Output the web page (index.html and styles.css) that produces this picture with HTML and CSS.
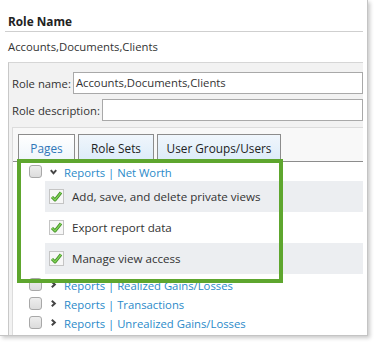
FILE: index.html
```html
<!DOCTYPE html>
<html>
<head>
<meta charset="utf-8">
<link rel="stylesheet" href="styles.css">
</head>
<body>
<div class="panel">
  <div class="title">Role Name</div>
  <div class="value">Accounts,Documents,Clients</div>
  <div class="form">
    <div class="field"><span class="label">Role name:</span><div class="input">Accounts,Documents,Clients</div></div>
    <div class="field field2"><span class="label">Role description:</span><div class="input"></div></div>
    <div class="tabsbox">
      <div class="tabs">
        <div class="tab tab-pages active">Pages</div>
        <div class="tab tab-sets">Role Sets</div>
        <div class="tab tab-users">User Groups/Users</div>
      </div>
      <div class="tree">
        <div class="node">
          <span class="cb"></span>
          <svg class="chev" width="7" height="6" viewBox="0 0 7 6"><path d="M0.8 1.2 L3.5 4.3 L6.2 1.2" fill="none" stroke="#444" stroke-width="2"/></svg>
          <span class="link">Reports | Net Worth</span>
        </div>
        <div class="child shade">
          <span class="ck"><svg width="13" height="13" viewBox="0 0 13 13"><path d="M2 7 L5 10 L11 2.5" fill="none" stroke="#3f8a22" stroke-width="3" stroke-linejoin="round"/><path d="M2 7 L5 10 L11 2.5" fill="none" stroke="#7fd257" stroke-width="1.4" stroke-linejoin="round"/></svg></span>
          <span class="ctext">Add, save, and delete private views</span>
        </div>
        <div class="child">
          <span class="ck"><svg width="13" height="13" viewBox="0 0 13 13"><path d="M2 7 L5 10 L11 2.5" fill="none" stroke="#3f8a22" stroke-width="3" stroke-linejoin="round"/><path d="M2 7 L5 10 L11 2.5" fill="none" stroke="#7fd257" stroke-width="1.4" stroke-linejoin="round"/></svg></span>
          <span class="ctext">Export report data</span>
        </div>
        <div class="child shade">
          <span class="ck"><svg width="13" height="13" viewBox="0 0 13 13"><path d="M2 7 L5 10 L11 2.5" fill="none" stroke="#3f8a22" stroke-width="3" stroke-linejoin="round"/><path d="M2 7 L5 10 L11 2.5" fill="none" stroke="#7fd257" stroke-width="1.4" stroke-linejoin="round"/></svg></span>
          <span class="ctext">Manage view access</span>
        </div>
        <div class="node node-gap">
          <span class="cb"></span>
          <svg class="chev" width="7" height="7" viewBox="0 0 7 7"><path d="M1.8 0.8 L4.8 3.5 L1.8 6.2" fill="none" stroke="#444" stroke-width="2"/></svg>
          <span class="link">Reports | Realized Gains/Losses</span>
        </div>
        <div class="node">
          <span class="cb"></span>
          <svg class="chev" width="7" height="7" viewBox="0 0 7 7"><path d="M1.8 0.8 L4.8 3.5 L1.8 6.2" fill="none" stroke="#444" stroke-width="2"/></svg>
          <span class="link">Reports | Transactions</span>
        </div>
        <div class="node">
          <span class="cb"></span>
          <svg class="chev" width="7" height="7" viewBox="0 0 7 7"><path d="M1.8 0.8 L4.8 3.5 L1.8 6.2" fill="none" stroke="#444" stroke-width="2"/></svg>
          <span class="link">Reports | Unrealized Gains/Losses</span>
        </div>
      </div>
      <div class="highlight"></div>
    </div>
  </div>
</div>
</body>
</html>
```
FILE: styles.css
```css
html, body {
  margin: 0;
  padding: 0;
  background: #ffffff;
}
body {
  width: 377px;
  height: 345px;
  overflow: hidden;
  font-family: "Open Sans", "Noto Sans", sans-serif;
  color: #333;
  font-size: 11.3px;
}
.panel {
  width: 367px;
  height: 335px;
  border-right: 1px solid #c4c4c4;
  border-bottom: 1px solid #c4c4c4;
  box-shadow: 2px 2px 4px rgba(0,0,0,0.22);
  background: #fff;
  display: flex;
  flex-direction: column;
  overflow: hidden;
}
.title {
  margin: 0 4px 0 5px;
  padding: 12px 0 1px 3px;
  line-height: 18px;
  font-weight: bold;
  font-size: 11.8px;
  color: #222;
  border-bottom: 1px solid #cfcfcf;
}
.value {
  padding: 6px 0 0 8px;
  line-height: 18px;
  color: #333;
}
.form {
  margin: 6px 4px 0 8px;
  flex: 1;
  border-left: 1px solid #c8c8c8;
  border-top: 1px solid #d6d6d6;
  background: #f2f2f2;
  display: flex;
  flex-direction: column;
  overflow: hidden;
}
.field {
  display: flex;
  align-items: center;
  padding-left: 3px;
  margin-top: 9px;
  height: 22px;
}
.field2 {
  margin-top: 5px;
}
.label {
  color: #333;
  white-space: nowrap;
  margin-right: 2px;
}
.input {
  flex: 1;
  height: 20px;
  line-height: 20px;
  border: 1px solid #a9a9a9;
  background: #fff;
  padding-left: 2px;
  color: #333;
  white-space: nowrap;
}
.tabsbox {
  position: relative;
  margin: 6px 0 0 3px;
  flex: 1;
  border-left: 1px solid #dcdcdc;
  border-top: 1px solid #dcdcdc;
  background: #fff;
}
.tabs {
  display: flex;
  gap: 3px;
  padding: 6px 0 0 5px;
  background: #f8f8f8;
  border-bottom: 1px solid #8c8c8c;
}
.tab {
  height: 27px;
  line-height: 27px;
  text-align: center;
  font-size: 11.8px;
  border: 1px solid #8c8c8c;
  border-bottom: none;
  background: linear-gradient(#f0f6fc, #dcebf9);
  color: #222;
  box-sizing: border-box;
}
.tab.active {
  background: linear-gradient(#ffffff, #eef5fb);
  color: #2f76b8;
}
.tab-pages { width: 57px; }
.tab-sets { width: 76px; }
.tab-users { width: 124px; }
.node {
  display: flex;
  align-items: center;
  height: 19px;
  padding-left: 16px;
}
.node-gap {
  margin-top: 1px;
}
.cb {
  width: 11px;
  height: 11px;
  border: 1px solid #a8a8a8;
  border-radius: 3px;
  background: linear-gradient(#eeeeee, #dcdcdc);
  flex: none;
}
.chev {
  margin-left: 8px;
  flex: none;
}
.link {
  margin-left: 7px;
  color: #2a8ac9;
  font-size: 11.3px;
  line-height: 19px;
  padding-top: 2px;
  white-space: nowrap;
}
.child {
  display: flex;
  align-items: center;
  height: 31px;
  margin-left: 32px;
  padding-left: 4px;
}
.shade {
  background: #eceef1;
}
.ck {
  width: 13px;
  height: 13px;
  border: 1px solid #c4c4c4;
  background: #f7f7f7;
  flex: none;
  display: flex;
}
.ctext {
  margin-left: 8px;
  font-size: 11.6px;
  color: #333;
  white-space: nowrap;
}
.highlight {
  position: absolute;
  left: 4px;
  top: 31px;
  width: 258px;
  height: 116px;
  border: 4px solid #5ea62e;
}
```
